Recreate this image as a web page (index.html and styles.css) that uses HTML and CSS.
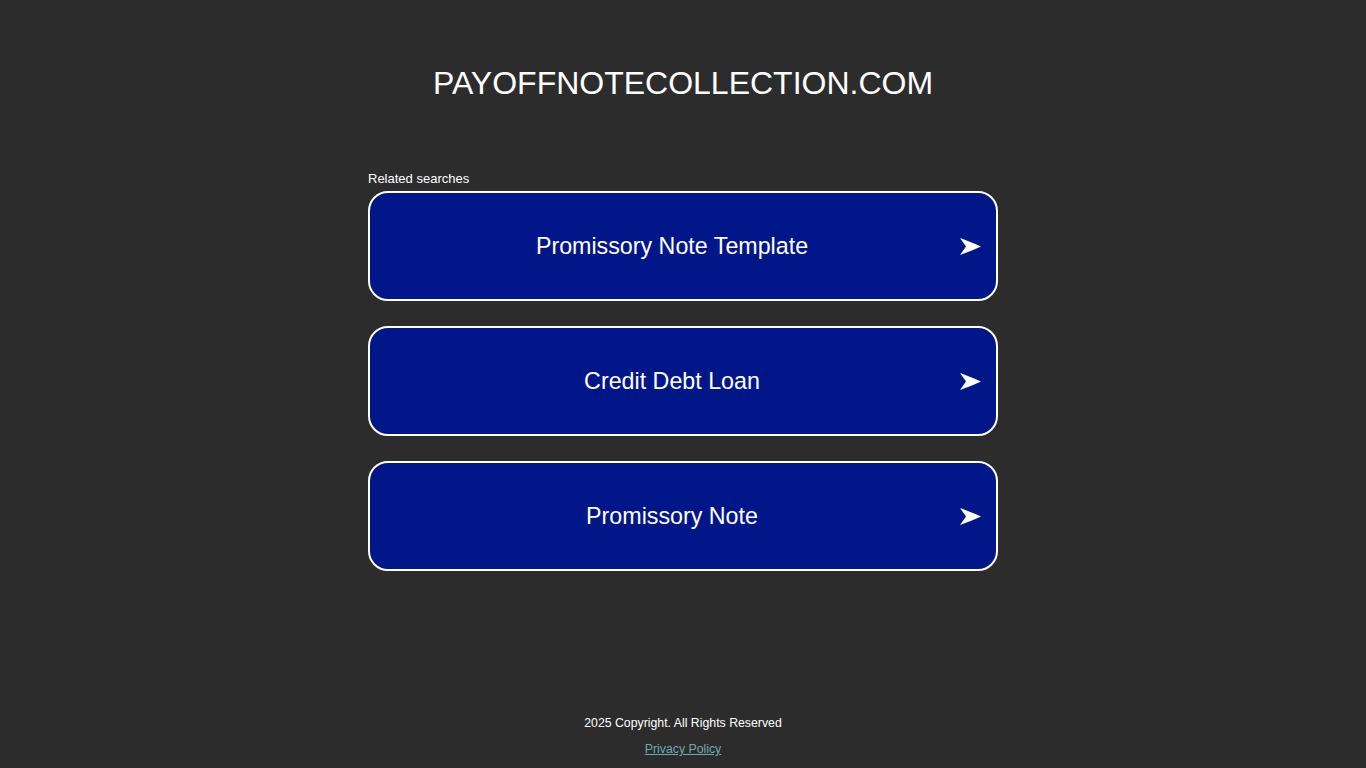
FILE: index.html
```html
<!DOCTYPE html>
<html>
<head>
<meta charset="utf-8">
<link rel="stylesheet" href="styles.css">
</head>
<body>
<div class="page">
  <header class="header">
    <h1 class="domain">PAYOFFNOTECOLLECTION.COM</h1>
  </header>
  <main class="main">
    <div class="related">Related searches</div>
    <ul class="links">
      <li><a class="link" href="#"><span class="label">Promissory Note Template</span><svg class="arrow" viewBox="0 0 21 17" width="21" height="17"><path d="M0 0 Q9 3 21 8.5 Q9 14 0 17 L6 8.5 Z" fill="#fff"/></svg></a></li>
      <li><a class="link" href="#"><span class="label">Credit Debt Loan</span><svg class="arrow" viewBox="0 0 21 17" width="21" height="17"><path d="M0 0 Q9 3 21 8.5 Q9 14 0 17 L6 8.5 Z" fill="#fff"/></svg></a></li>
      <li><a class="link" href="#"><span class="label">Promissory Note</span><svg class="arrow" viewBox="0 0 21 17" width="21" height="17"><path d="M0 0 Q9 3 21 8.5 Q9 14 0 17 L6 8.5 Z" fill="#fff"/></svg></a></li>
    </ul>
  </main>
  <footer class="footer">
    <div class="copy">2025 Copyright. All Rights Reserved</div>
    <a class="privacy" href="#">Privacy Policy</a>
  </footer>
</div>
</body>
</html>
```

FILE: styles.css
```css
html, body {
  margin: 0;
  padding: 0;
  background: #2c2c2c;
  height: 100%;
}
.page {
  height: 768px;
  display: flex;
  flex-direction: column;
  align-items: center;
  font-family: "Liberation Sans", Arial, sans-serif;
  color: #fff;
}
.header {
  padding-top: 63px;
}
.domain {
  margin: 0;
  font-size: 32px;
  font-weight: 400;
  line-height: 40px;
  text-align: center;
}
.main {
  width: 630px;
  margin-top: 68px;
}
.related {
  font-size: 13px;
  line-height: 16px;
  margin-bottom: 4px;
}
.links {
  list-style: none;
  margin: 0;
  padding: 0;
  display: flex;
  flex-direction: column;
  gap: 25px;
}
.link {
  box-sizing: border-box;
  height: 110px;
  display: flex;
  align-items: center;
  border: 2px solid #fff;
  border-radius: 20px;
  background: #011689;
  color: #fff;
  text-decoration: none;
  padding: 0 15px 0 0;
}
.label {
  flex: 1;
  margin-right: -14px;
  text-align: center;
  font-size: 23.25px;
}
.arrow {
  display: block;
  flex: none;
}
.footer {
  margin-top: auto;
  padding-bottom: 11px;
  text-align: center;
  font-size: 12.3px;
}
.copy {
  line-height: 16px;
}
.privacy {
  display: inline-block;
  margin-top: 10px;
  color: #72a8b2;
  line-height: 16px;
}
```
